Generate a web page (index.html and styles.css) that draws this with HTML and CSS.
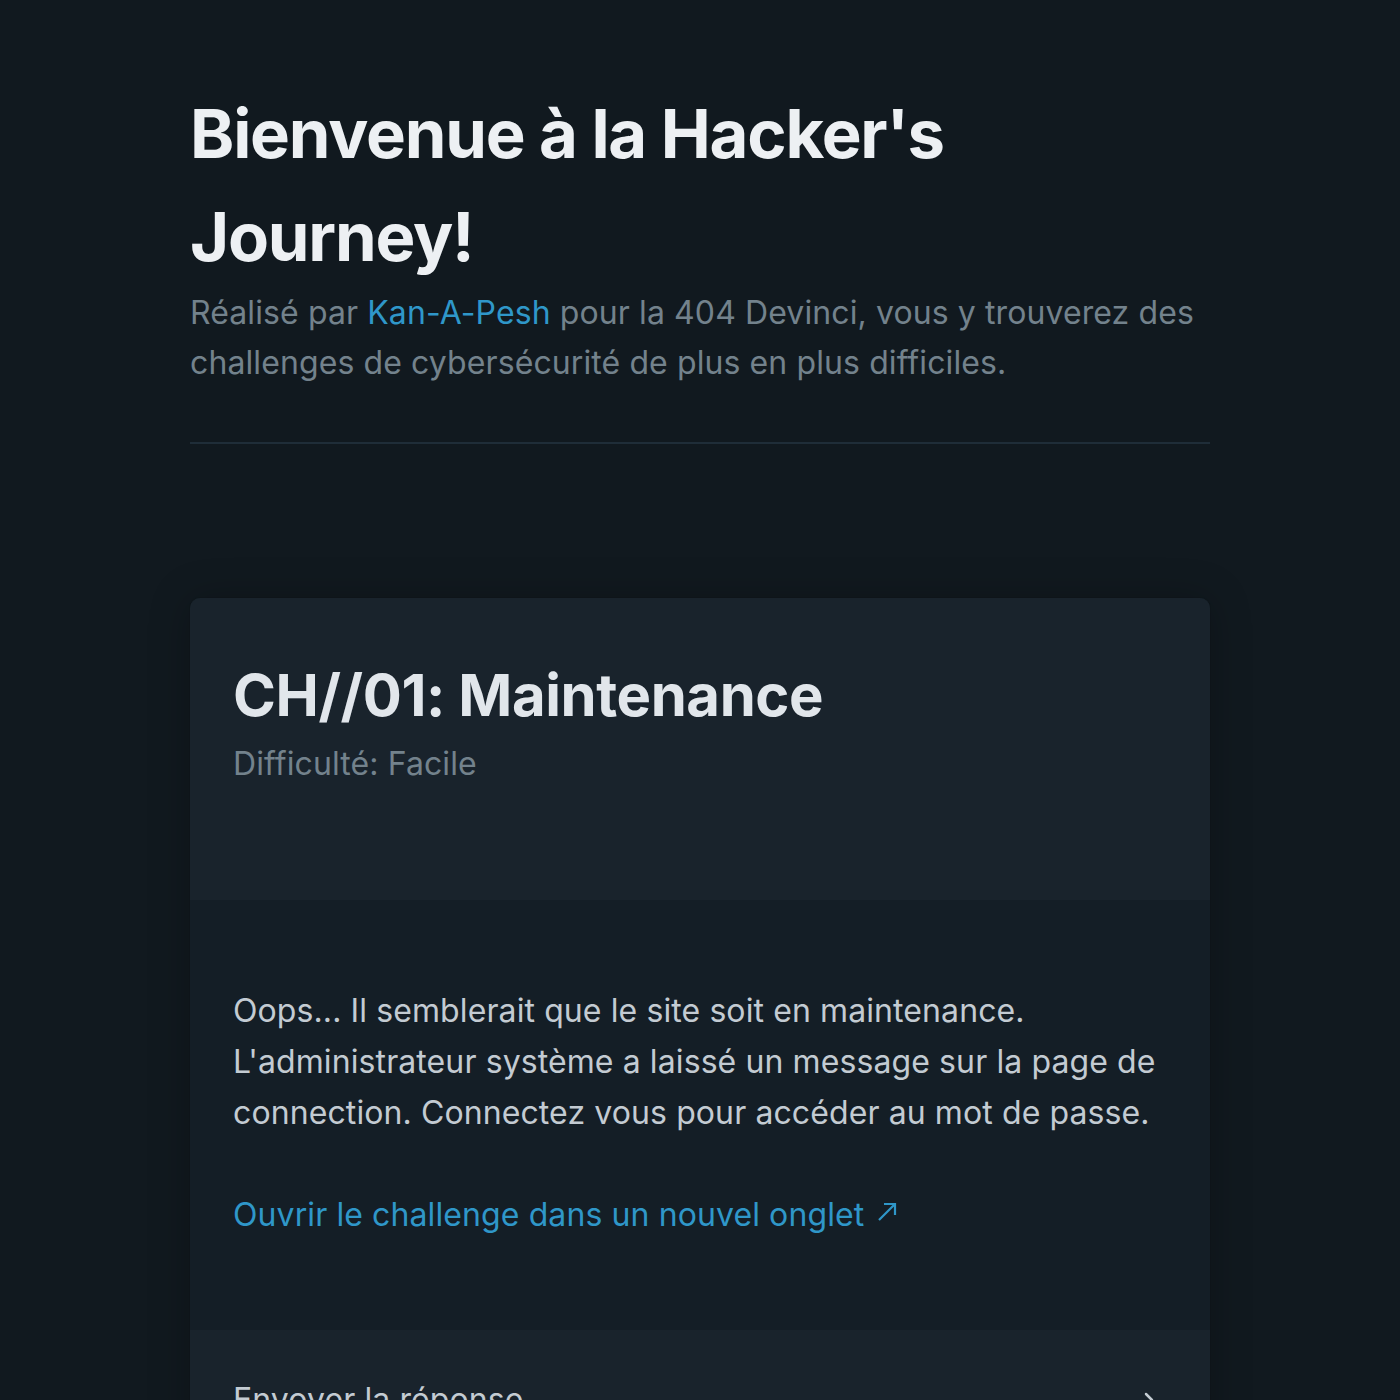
FILE: index.html
```html
<!DOCTYPE html>
<html lang="fr">
<head>
<meta charset="utf-8">
<title>Hacker's Journey</title>
<link rel="stylesheet" href="styles.css">
</head>
<body>
<main class="container">
  <hgroup class="intro">
    <h1 class="intro-title">Bienvenue à la Hacker's Journey!</h1>
    <p class="intro-sub">Réalisé par <a href="#" class="link">Kan-A-Pesh</a> pour la 404 Devinci, vous y trouverez des challenges de cybersécurité de plus en plus difficiles.</p>
  </hgroup>
  <hr class="divider">
  <article class="card">
    <header class="card-header">
      <h2 class="card-title">CH//01: Maintenance</h2>
      <p class="card-muted">Difficulté: Facile</p>
    </header>
    <div class="card-body">
      <p class="card-text">Oops... Il semblerait que le site soit en maintenance. L'administrateur système a laissé un message sur la page de connection. Connectez vous pour accéder au mot de passe.</p>
      <a href="#" class="link card-link">Ouvrir le challenge dans un nouvel onglet <svg class="ext" width="24" height="24" viewBox="0 0 24 24"><path d="M3 21 L19 5 M8 5 H19 V16" fill="none" stroke="currentColor" stroke-width="2.2" stroke-linecap="butt"/></svg></a>
    </div>
    <footer class="card-footer">
      <details class="answer">
        <summary class="answer-summary"><span>Envoyer la réponse</span><svg class="chev" width="24" height="24" viewBox="0 0 24 24"><path d="M9 6 L15 12 L9 18" fill="none" stroke="currentColor" stroke-width="2.5" stroke-linecap="round" stroke-linejoin="round"/></svg></summary>
      </details>
    </footer>
  </article>
</main>
</body>
</html>
```
FILE: styles.css
```css
html, body {
  margin: 0;
  padding: 0;
  background: #11191f;
}
body {
  font-family: Inter, "Noto Sans", sans-serif;
  color: #c3cbd2;
}
.container {
  width: 1020px;
  margin: 0 auto;
  padding-top: 82px;
  padding-bottom: 60px;
}
.intro {
  margin: 0;
}
.intro-title {
  margin: 0;
  font-size: 67px;
  line-height: 103px;
  font-weight: 700;
  color: #edf0f3;
  letter-spacing: -1.2px;
}
.intro-sub {
  margin: 0;
  font-size: 32px;
  line-height: 50px;
  letter-spacing: 0.1px;
  color: #73828c;
}
.link {
  color: #2f97c9;
  text-decoration: none;
}
.divider {
  margin: 54px 0 0;
  border: 0;
  border-top: 2px solid #1f2d38;
  height: 0;
}
.card {
  margin-top: 154px;
  background: #141e26;
  border-radius: 10px;
  overflow: hidden;
  box-shadow: 0 2px 40px rgba(0, 0, 0, 0.25), 0 0 0 1px rgba(0,0,0,0.05);
}
.card-header {
  background: #19232c;
  padding: 59px 43px 111px;
}
.card-title {
  margin: 0;
  font-size: 58px;
  line-height: 76px;
  font-weight: 700;
  color: #e1e6eb;
  letter-spacing: -0.4px;
}
.card-muted {
  margin: 6px 0 0;
  font-size: 32px;
  line-height: 50px;
  letter-spacing: 0.1px;
  color: #73828c;
}
.card-body {
  padding: 85px 43px 90px;
}
.card-text {
  margin: 0 0 51px;
  font-size: 32px;
  line-height: 51px;
  letter-spacing: 0.1px;
}
.card-link {
  display: inline-flex;
  align-items: center;
  gap: 12px;
  font-size: 32px;
  line-height: 51px;
  letter-spacing: 0.1px;
}
.ext {
  margin-top: -8px;
}
.card-footer {
  background: #19232c;
  padding: 45px 43px 52px;
}
.answer-summary {
  list-style: none;
  display: flex;
  justify-content: space-between;
  align-items: center;
  font-size: 32px;
  line-height: 50px;
  letter-spacing: 0.1px;
  color: #c3cbd2;
}
.answer-summary::-webkit-details-marker {
  display: none;
}
.chev {
  color: #c3cbd2;
  margin-right: 6px;
}
```
